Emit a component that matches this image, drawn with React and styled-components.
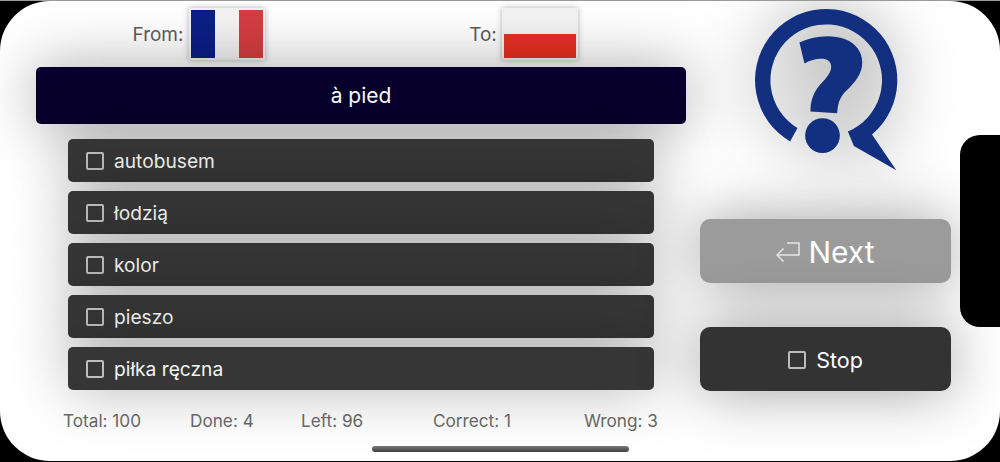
import React from 'react';
import styled, { createGlobalStyle } from 'styled-components';

const GlobalStyle = createGlobalStyle`
  html, body {
    margin: 0;
    padding: 0;
    background: #000;
  }
  body {
    font-family: Inter, "Liberation Sans", sans-serif;
  }
`;

const Frame = styled.div`
  position: relative;
  box-sizing: border-box;
  width: 1000px;
  height: 462px;
  background: #000;
  border-top: 1px solid #9a9a9a;
  overflow: hidden;
`;

const Screen = styled.div`
  box-sizing: border-box;
  height: 460px;
  background: #fff;
  border-radius: 50px;
  padding: 0 49px 0 36px;
  display: grid;
  grid-template-columns: 650px 251px;
  column-gap: 14px;
  overflow: hidden;
`;

const Notch = styled.div`
  position: absolute;
  top: 134px;
  right: 0;
  width: 40px;
  height: 192px;
  background: #000;
  border-radius: 20px 0 0 20px;
`;

const HomeBar = styled.div`
  position: absolute;
  left: 372px;
  top: 445px;
  width: 257px;
  height: 6px;
  border-radius: 3px;
  background: linear-gradient(#7a7a7a, #3f3f3f);
`;

const Main = styled.div`
  display: flex;
  flex-direction: column;
  padding-top: 7px;
`;

const Header = styled.div`
  display: grid;
  grid-template-columns: 1fr 1fr;
  height: 52px;
`;

const Lang = styled.div`
  display: flex;
  align-items: center;
  justify-content: center;
  gap: 5px;
  color: #5c5c5c;
  font-size: 19px;
`;

const Flag = styled.div`
  box-sizing: border-box;
  width: 76px;
  height: 52px;
  border: 2px solid #f2f2f2;
  box-shadow: 0 0 6px rgba(0, 0, 0, 0.3);
  display: flex;
  flex-direction: ${p => (p.$vertical ? 'column' : 'row')};
`;

const Stripe = styled.div`
  flex: 1;
  background: ${p => p.$color};
`;

const QuestionBar = styled.div`
  height: 57px;
  margin-top: 7px;
  border-radius: 5px;
  background: #07002c;
  color: #fff;
  font-size: 21px;
  display: flex;
  align-items: center;
  justify-content: center;
  box-shadow: 0 0 60px rgba(0, 0, 0, 0.35);
`;

const Options = styled.div`
  margin: 15px 32px 0;
  display: flex;
  flex-direction: column;
  gap: 9px;
`;

const Option = styled.div`
  height: 43px;
  border-radius: 5px;
  background: #363636;
  color: #f4f4f4;
  font-size: 19.2px;
  display: flex;
  align-items: center;
  padding-left: 18px;
  gap: 10px;
  box-shadow: 0 0 60px rgba(0, 0, 0, 0.3);
`;

const Box = styled.span`
  box-sizing: border-box;
  display: block;
  flex: none;
  width: 18px;
  height: 18px;
  border: 2px solid #bdbdbd;
  border-radius: 2px;
`;

const Stats = styled.div`
  margin: 21px 0 0 27px;
  display: grid;
  grid-template-columns: 127px 111px 132px 151px auto;
  color: #666;
  font-size: 17.2px;
  line-height: 20px;
`;

const Side = styled.div`
  display: flex;
  flex-direction: column;
  align-items: center;
  padding-top: 7px;
`;

const Logo = styled.svg`
  display: block;
  width: 142px;
  height: 163px;
  overflow: visible;
  filter: drop-shadow(0 0 30px rgba(0, 0, 0, 0.4));
`;

const ActionButton = styled.div`
  box-sizing: border-box;
  width: 100%;
  height: 64px;
  padding-top: 2px;
  border-radius: 10px;
  margin-top: ${p => p.$top}px;
  background: ${p => p.$bg};
  color: #fff;
  font-size: ${p => p.$size}px;
  display: flex;
  align-items: center;
  justify-content: center;
  gap: ${p => p.$gap}px;
  box-shadow: 0 0 60px rgba(0, 0, 0, 0.38);
`;

const options = ['autobusem', 'łodzią', 'kolor', 'pieszo', 'piłka ręczna'];
const stats = ['Total: 100', 'Done: 4', 'Left: 96', 'Correct: 1', 'Wrong: 3'];

const App = () => {
  return (
    <Frame>
      <GlobalStyle />
      <Screen>
        <Main>
          <Header>
            <Lang>
              From:
              <Flag>
                <Stripe $color="#0b1f86" />
                <Stripe $color="#f3f3f3" />
                <Stripe $color="#d53d41" />
              </Flag>
            </Lang>
            <Lang>
              To:
              <Flag $vertical>
                <Stripe $color="#f3f3f3" />
                <Stripe $color="#e63022" />
              </Flag>
            </Lang>
          </Header>
          <QuestionBar>à pied</QuestionBar>
          <Options>
            {options.map(o => (
              <Option key={o}>
                <Box />
                {o}
              </Option>
            ))}
          </Options>
          <Stats>
            {stats.map(s => (
              <span key={s}>{s}</span>
            ))}
          </Stats>
        </Main>
        <Side>
          <Logo viewBox="72 22 425 488">
            <g fill="#122f80">
              <path d="M177 421.7 A213 213 0 1 1 422.2 401 L495 508 L368 435 L350 392 A167 167 0 1 0 199.2 381.3 Z" />
              <path d="M205 125 C250 105 300 100 340 115 C375 128 393 155 393 185 C393 220 370 245 350 265 C330 283 320 300 318 337 L238 332 C238 295 250 270 270 248 C288 228 300 215 300 197 C300 180 285 172 265 174 C250 175 235 180 220 188 Z" />
              <circle cx="274" cy="404" r="52" />
            </g>
          </Logo>
          <ActionButton $top={48} $bg="#9b9b9b" $size={30} $gap={8}>
            <svg width="24" height="22" viewBox="0 0 24 22" fill="none" stroke="#e6e6e6" strokeWidth="1.5" strokeLinejoin="round">
              <path d="M11 2 H23 V14 H1" />
              <path d="M7.5 7.5 L1 14 L7.5 20.5" />
            </svg>
            Next
          </ActionButton>
          <ActionButton $top={44} $bg="#333" $size={21.5} $gap={10}>
            <Box />
            Stop
          </ActionButton>
        </Side>
      </Screen>
      <Notch />
      <HomeBar />
    </Frame>
  );
};

export default App;
